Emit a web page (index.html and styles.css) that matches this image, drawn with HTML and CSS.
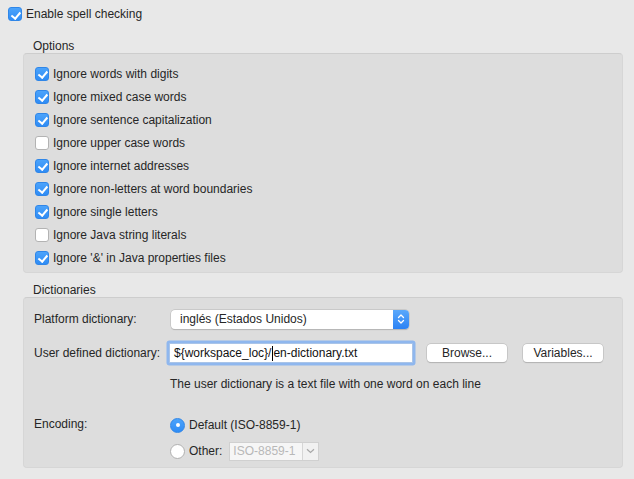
FILE: index.html
```html
<!DOCTYPE html>
<html>
<head>
<meta charset="utf-8">
<link rel="stylesheet" href="styles.css">
</head>
<body>
<div class="page">
  <label class="check top-check"><span class="cb on"></span><span>Enable spell checking</span></label>

  <section class="group options">
    <div class="group-title">Options</div>
    <div class="group-box">
      <label class="check row"><span class="cb on"></span><span>Ignore words with digits</span></label>
      <label class="check row"><span class="cb on"></span><span>Ignore mixed case words</span></label>
      <label class="check row"><span class="cb on"></span><span>Ignore sentence capitalization</span></label>
      <label class="check row"><span class="cb"></span><span>Ignore upper case words</span></label>
      <label class="check row"><span class="cb on"></span><span>Ignore internet addresses</span></label>
      <label class="check row"><span class="cb on"></span><span>Ignore non-letters at word boundaries</span></label>
      <label class="check row"><span class="cb on"></span><span>Ignore single letters</span></label>
      <label class="check row"><span class="cb"></span><span>Ignore Java string literals</span></label>
      <label class="check row"><span class="cb on"></span><span>Ignore '&amp;' in Java properties files</span></label>
    </div>
  </section>

  <section class="group dicts">
    <div class="group-title">Dictionaries</div>
    <div class="group-box dict-box">
      <div class="drow platform">
        <span class="lbl">Platform dictionary:</span>
        <div class="popup">
          <span class="popup-text">inglés (Estados Unidos)</span>
          <span class="popup-arrows">
            <svg width="8" height="12" viewBox="0 0 8 12"><path d="M1.5 4.5 L4 2 L6.5 4.5 M1.5 7.5 L4 10 L6.5 7.5" fill="none" stroke="#fff" stroke-width="1.3" stroke-linecap="round" stroke-linejoin="round"/></svg>
          </span>
        </div>
      </div>
      <div class="drow user">
        <span class="lbl">User defined dictionary:</span>
        <div class="field focus"><span>${workspace_loc}/</span><span class="caret"></span><span>en-dictionary.txt</span></div>
        <button class="btn browse">Browse...</button>
        <button class="btn vars">Variables...</button>
      </div>
      <div class="drow helper">
        <span class="lbl"></span>
        <span class="hint">The user dictionary is a text file with one word on each line</span>
      </div>
      <div class="drow encoding">
        <span class="lbl">Encoding:</span>
        <div class="radios">
          <label class="radio"><span class="rb on"></span><span>Default (ISO-8859-1)</span></label>
          <label class="radio"><span class="rb"></span><span>Other:</span>
            <div class="combo"><span class="combo-text">ISO-8859-1</span><span class="combo-arrow"><svg width="9" height="6" viewBox="0 0 9 6"><path d="M1 1.2 L4.5 4.5 L8 1.2" fill="none" stroke="#a8a8a8" stroke-width="1.2"/></svg></span></div>
          </label>
        </div>
      </div>
    </div>
  </section>
</div>
</body>
</html>
```
FILE: styles.css
```css
* { box-sizing: border-box; }
html, body { margin: 0; padding: 0; }
body {
  background: #e8e8e8;
  font-family: "Liberation Sans", Arial, sans-serif;
  font-size: 12px;
  color: #262626;
  width: 634px;
  height: 479px;
  overflow: hidden;
}
.page { padding-top: 4px; }

.check { display: flex; align-items: center; height: 20px; }
.top-check { padding-left: 8px; gap: 4px; }

.cb {
  width: 14px; height: 14px;
  border-radius: 3px;
  background: #fff;
  border: 1px solid #b3b3b3;
  flex: none;
  position: relative;
}
.cb.on {
  background: linear-gradient(#4ba3fb, #2f8cf5);
  border-color: #2f86e8;
}
.cb.on::after {
  content: "";
  position: absolute;
  left: 4px; top: 1.5px;
  width: 3.5px; height: 7px;
  border-right: 2px solid #fff;
  border-bottom: 2px solid #fff;
  transform: rotate(40deg);
}

.group { margin-left: 23px; width: 600px; }
.group-title { padding-left: 10px; height: 14px; line-height: 14px; }
.options { margin-top: 15px; }
.group-box {
  background: #dddddd;
  border: 1px solid #d6d6d6;
  border-top-color: #cdcdcd;
  border-radius: 4px;
}
.options .group-box { padding: 8px 11px 3px; }
.row { height: 23px; gap: 4px; }

.dicts { margin-top: 10px; }
.dict-box { padding: 10px 0 0 10px; height: 171px; }

.drow { display: flex; align-items: center; }
.lbl { width: 136px; flex: none; }
.platform { height: 22px; }
.user { height: 24px; margin-top: 11px; }
.helper { height: 20px; margin-top: 9px; }
.encoding { align-items: flex-start; margin-top: 18px; }
.encoding .lbl { padding-top: 5px; }

.popup {
  width: 238px; height: 19px;
  margin-left: 1px;
  background: #fff;
  border-radius: 4px;
  box-shadow: 0 0 0 0.5px #b9b9b9, 0 0.5px 1px rgba(0,0,0,0.2);
  display: flex; align-items: center;
  overflow: hidden;
}
.popup-text { flex: 1; padding-left: 9px; }
.popup-arrows {
  width: 16px; height: 19px;
  background: linear-gradient(#5aa8fb, #2b82f4);
  display: flex; align-items: center; justify-content: center;
}

.field {
  width: 244px; height: 20px;
  margin-left: -1px;
  background: #fff;
  border: 1px solid #a9c4e8;
  box-shadow: 0 0 0 2.5px #8fb7ee;
  border-radius: 1px;
  display: flex; align-items: center;
  padding-left: 4px;
  color: #111;
}
.caret { width: 1px; height: 15px; background: #000; margin: 0 0 0 1px; }

.btn {
  font: inherit;
  color: #262626;
  width: 80px; height: 18px;
  background: #fff;
  border: none;
  border-radius: 4px;
  box-shadow: 0 0 0 0.5px #b5b5b5, 0 0.5px 1px rgba(0,0,0,0.2);
  padding: 0;
}
.browse { margin-left: 14px; }
.vars { margin-left: 16px; }

.hint { color: #262626; }

.radios { display: flex; flex-direction: column; }
.radio { display: flex; align-items: center; height: 26px; gap: 4px; }
.rb {
  width: 15px; height: 15px; border-radius: 50%;
  background: #fff; border: 1px solid #b0b0b0;
  flex: none; position: relative;
}
.rb.on { background: linear-gradient(#4ba3fb, #2f8cf5); border-color: #2f86e8; }
.rb.on::after {
  content: ""; position: absolute;
  left: 4.5px; top: 4.5px; width: 4px; height: 4px;
  border-radius: 50%; background: #fff;
}
.combo {
  margin-left: 3px;
  width: 90px; height: 19px;
  display: flex;
  border: 1px solid #d0d0d0;
  background: #f1f1f1;
}
.combo-text { flex: 1; color: #b8b8b8; padding-left: 3px; line-height: 17px; background: #f6f6f6; }
.combo-arrow { width: 16px; display: flex; align-items: center; justify-content: center; border-left: 1px solid #d6d6d6; }
```
